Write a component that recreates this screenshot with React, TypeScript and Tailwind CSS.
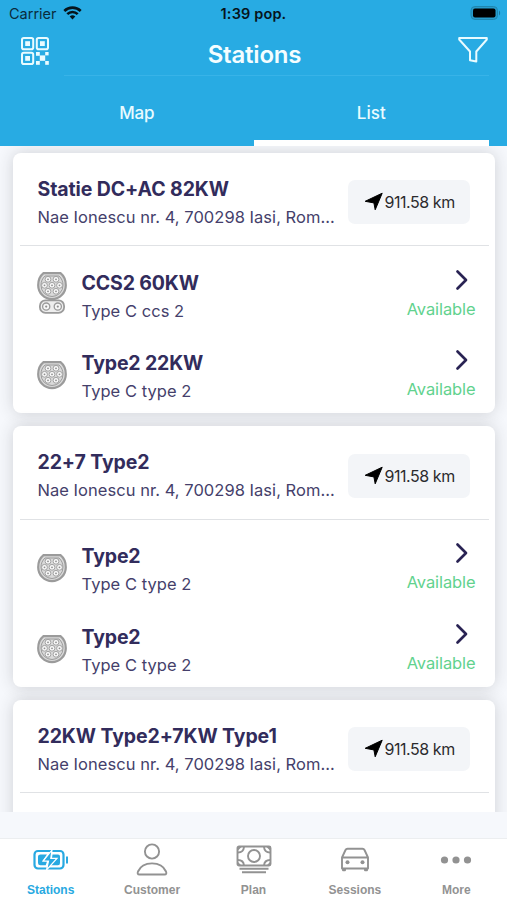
import React from 'react';

type Connector = { name: string; type: string; ccs?: boolean };
type Station = { name: string; connectors: Connector[] };

const stations: Station[] = [
  {
    name: 'Statie DC+AC 82KW',
    connectors: [
      { name: 'CCS2 60KW', type: 'Type C ccs 2', ccs: true },
      { name: 'Type2 22KW', type: 'Type C type 2' },
    ],
  },
  {
    name: '22+7 Type2',
    connectors: [
      { name: 'Type2', type: 'Type C type 2' },
      { name: 'Type2', type: 'Type C type 2' },
    ],
  },
  {
    name: '22KW Type2+7KW Type1',
    connectors: [],
  },
];

const pins: [number, number][] = [
  [11, 8], [19, 8], [7.5, 14], [15, 14], [22.5, 14], [11, 20], [19, 20],
];

function Plug({ ccs }: { ccs?: boolean }) {
  return (
    <svg width="30" height={ccs ? 42 : 29} viewBox={ccs ? '0 0 30 42' : '0 0 30 29'} fill="none" stroke="#9b9b9b">
      <path d="M6.5 1.2H23.5C27 4 28.8 8.5 28.8 13.2A13.8 14 0 0 1 1.2 13.2C1.2 8.5 3 4 6.5 1.2Z" strokeWidth="2.2" fill="#dadada" />
      <path d="M8 4H22C24.7 6.5 26 9.5 26 13.3A11 11.2 0 0 1 4 13.3C4 9.5 5.3 6.5 8 4Z" strokeWidth="1" />
      {pins.map(([x, y]) => (
        <g key={`${x}-${y}`}>
          <circle cx={x} cy={y - 0.7} r="2.9" strokeWidth="0.9" fill="#f7f7f7" />
          <circle cx={x} cy={y - 0.7} r="0.9" fill="#8f8f8f" stroke="none" />
        </g>
      ))}
      {ccs && (
        <g>
          <rect x="2.9" y="28.4" width="24.2" height="12.4" rx="5.5" strokeWidth="1.8" fill="#eee" />
          <circle cx="9.2" cy="34.6" r="3.6" strokeWidth="1.3" fill="#f7f7f7" />
          <circle cx="20.8" cy="34.6" r="3.6" strokeWidth="1.3" fill="#f7f7f7" />
          <circle cx="9.2" cy="34.6" r="1.1" fill="#8f8f8f" stroke="none" />
          <circle cx="20.8" cy="34.6" r="1.1" fill="#8f8f8f" stroke="none" />
        </g>
      )}
    </svg>
  );
}

function StationCard({ station }: { station: Station }) {
  return (
    <section className="min-h-[260.5px] w-[482px] shrink-0 rounded-[8px] bg-white pb-[5.5px] shadow-[0_0_16px_rgba(40,42,46,0.19)]">
      <div className="flex h-[92.5px] items-start pl-[25px] pr-[24px]">
        <div className="w-[310px] pt-[22px] text-[#322c5c]">
          <h2 className="whitespace-nowrap text-[19.5px] font-bold leading-[28px] tracking-[-0.1px]">{station.name}</h2>
          <p className="whitespace-nowrap text-[16.5px] leading-[28px] tracking-[0.04px] text-[#453f6b]">Nae Ionescu nr. 4, 700298 Iasi, Rom...</p>
        </div>
        <div className="mt-[27.5px] flex h-[44px] w-[122px] items-center rounded-[7px] bg-[#f3f5f8] pl-[16px]">
          <svg width="20" height="20" viewBox="0 0 20 20" fill="#000" stroke="#000" strokeWidth="1" strokeLinejoin="round"><path d="M18.2 1.200 11.200 17.800 9.900 10.900 1.200 9.300Z" /></svg>
          <span className="whitespace-nowrap pl-[1px] text-[16px] leading-[20px] tracking-[-0.45px] text-[#2b2b2d]">911.58 km</span>
        </div>
      </div>
      <div className="ml-[7px] mr-[6px] h-px bg-[#e0e2e5]" />
      {station.connectors.map((c, i) => (
        <div key={i} className="flex h-[80.7px] pl-[25px] pr-[19px]">
          <div className={`-ml-[0.5px] w-[44.5px] ${c.ccs ? 'pt-[26px]' : 'pt-[34.5px]'}`}><Plug ccs={c.ccs} /></div>
          <div className="flex-1 pt-[22.5px] text-[#322c5c]">
            <h3 className="text-[19.5px] font-bold leading-[28px] tracking-[-0.15px]">{c.name}</h3>
            <p className="text-[16.5px] leading-[28px] tracking-[0.04px] text-[#453f6b]">{c.type}</p>
          </div>
          <div className="flex flex-col items-end pt-[19.5px]">
            <svg className="mr-[6px]" width="16" height="28" viewBox="0 0 16 28" fill="none" stroke="#292353" strokeWidth="2.7" strokeLinecap="round" strokeLinejoin="round"><path d="M3.5 5.5 12 14 3.5 22.5" /></svg>
            <span className="mt-[1px] text-[16.5px] leading-[28px] tracking-[-0.1px] text-[#61d28e]">Available</span>
          </div>
        </div>
      ))}
    </section>
  );
}

function QrIcon() {
  return (
    <svg width="30" height="30" viewBox="0 0 30 30" fill="none" stroke="#e9fbff" strokeWidth="2">
      <rect x="2" y="2" width="11.2" height="11.2" rx="1.8" />
      <rect x="16.8" y="2" width="11.2" height="11.2" rx="1.8" />
      <rect x="2" y="16.8" width="11.2" height="11.2" rx="1.8" />
      <g fill="#e9fbff" stroke="none">
        <rect x="5.2" y="5.2" width="4.8" height="4.8" />
        <rect x="20" y="5.2" width="4.8" height="4.8" />
        <rect x="5.2" y="20" width="4.8" height="4.8" />
        <rect x="16" y="16" width="3.8" height="3.8" />
        <rect x="19.8" y="19.4" width="5.4" height="5.4" />
        <rect x="25.2" y="16" width="3.4" height="3.4" />
        <rect x="16" y="25" width="3.8" height="3.8" />
        <rect x="25.2" y="25" width="3.6" height="3.8" />
      </g>
    </svg>
  );
}

function TabItem({ label, active, children }: { label: string; active?: boolean; children: React.ReactNode }) {
  return (
    <div className={`flex flex-1 flex-col items-center ${active ? 'text-[#28a9e1]' : 'text-[#929292]'}`}>
      <div className="h-[44px]">{children}</div>
      <span className="font-['Liberation_Sans',sans-serif] text-[12px] font-bold leading-[14px]">{label}</span>
    </div>
  );
}

export default function App() {
  return (
    <div className="flex h-[900px] w-[507px] flex-col overflow-hidden bg-[#f6f8fc] font-[Inter,sans-serif]">
      <header className="flex h-[146px] shrink-0 flex-col bg-[#28abe3]">
        <div className="grid h-[28px] grid-cols-3 items-center pl-[9px] pr-[7px]">
          <div className="flex items-center gap-[6px] text-[#0a2c3c]">
            <span className="text-[14.5px] leading-[20px]">Carrier</span>
            <svg className="-mt-[2px]" width="19" height="14" viewBox="0 0 19 14" fill="none" stroke="#06141b" strokeWidth="2.6">
              <path d="M1.3 5A11.7 11.7 0 0 1 17.7 5M4.3 8.2a7.4 7.4 0 0 1 10.4 0" />
              <path d="M6.7 10.5a4.2 4.2 0 0 1 5.6 0L9.5 13.5Z" fill="#06141b" stroke="none" />
            </svg>
          </div>
          <div className="pr-[2px] text-center text-[14.5px] font-semibold leading-[20px] tracking-[0.15px] text-[#06141b]">1:39 pop.</div>
          <div className="-mr-[1px] -mt-[2px] flex justify-end">
            <svg width="31" height="14" viewBox="0 0 31 14">
              <rect x="1" y=".5" width="26.5" height="13" rx="4" fill="#279bcb" stroke="#1f86af" />
              <rect x="3" y="2.5" width="22.5" height="9" rx="2" fill="#000" />
              <path d="M29 4.5C30.5 5.2 30.5 8.8 29 9.5Z" fill="#1c7a9f" />
            </svg>
          </div>
        </div>
        <div className="flex h-[47px] items-start justify-between pl-[20px] pr-[18px]">
          <div className="w-[32px] pt-[8px]"><QrIcon /></div>
          <h1 className="pt-[11px] text-[24px] font-semibold leading-[32px] tracking-[-0.2px] text-[#f4fdff]">Stations</h1>
          <svg className="mt-[8px]" width="32" height="30" viewBox="0 0 32 30" fill="none" stroke="#e9fbff" strokeWidth="2" strokeLinejoin="round">
            <path d="M2.2 2H29.8V3.5L19.3 15.5V25.500L13 24.200V15.500L2.2 3.5Z" />
          </svg>
        </div>
        <div className="ml-[64px] mr-[18px] h-px shrink-0 bg-[#38b3e8]" />
        <nav className="mx-[18px] grid flex-1 grid-cols-2 text-center text-[17px] font-medium text-[#e9fbff]">
          <div className="pl-[2px] pt-[24px] leading-[26px] tracking-[-0.3px]">Map</div>
          <div className="flex flex-col justify-between pt-[24px] leading-[26px]">List<span className="h-[6px] bg-white" /></div>
        </nav>
      </header>

      <main className="flex h-[666px] shrink-0 flex-col items-center gap-[13.2px] overflow-hidden pt-[6.6px]">
        {stations.map((s) => <StationCard key={s.name} station={s} />)}
      </main>

      <footer className="mt-[26px] flex flex-1 border-t border-[#eceef0] bg-white">
        <TabItem label="Stations" active>
          <svg className="mt-[9px]" width="36" height="24" viewBox="0 0 36 24" fill="none" stroke="currentColor">
            <rect x="1.5" y="3" width="29" height="17.5" rx="3.5" strokeWidth="2.2" />
            <path d="M7.5 6.5H14L9 13.5H14L12.7 17.2H7.5Q5 17.2 5 15V8.5Q5 6.5 7.5 6.5ZM19.5 6.5H25Q27 6.5 27 8.5V15Q27 17.2 25 17.2H18L24.3 10H19Z" fill="currentColor" stroke="none" />
            <path d="M19 2 10.3 13H15.5L13.5 22 24 10.3H17.8Z" fill="currentColor" stroke="#fff" strokeWidth="1.2" />
            <path d="M34 8.5V15.5" strokeWidth="2" />
          </svg>
        </TabItem>
        <TabItem label="Customer">
          <svg className="mt-[4px]" width="32" height="34" viewBox="0 0 32 34" fill="none" stroke="currentColor" strokeWidth="1.9">
            <circle cx="16" cy="8.5" r="7.1" />
            <path d="M3.5 31.5H28.5C30.5 31.5 30.6 30 30 28.5C27.8 23.4 22.5 20.4 16 20.4S4.2 23.4 2 28.5C1.4 30 1.5 31.5 3.5 31.5Z" />
          </svg>
        </TabItem>
        <TabItem label="Plan">
          <svg className="mt-[6px]" width="36" height="30" viewBox="0 0 36 30" fill="none" stroke="currentColor" strokeWidth="1.9">
            <rect x="1.5" y="1.5" width="33" height="19" rx="1.5" />
            <circle cx="18" cy="11" r="6" />
            <path d="M2 7.5Q7.5 7.5 8 2M28 2Q28.5 7.5 34 7.5M2 15Q7.5 15 8 20.5M28 20.5Q28.5 15 34 15M3.5 23.8H32.5M6 27.3H30" />
            <path d="M2 2H5.5L2 5.5ZM34 2H30.5L34 5.5ZM2 20.5V17L5.5 20.5ZM34 20.5V17L30.5 20.5Z" fill="currentColor" stroke="none" />
          </svg>
        </TabItem>
        <TabItem label="Sessions">
          <svg className="mt-[8px]" width="30" height="26" viewBox="0 0 30 26" fill="none" stroke="currentColor" strokeWidth="1.9" strokeLinejoin="round">
            <path d="M2 10.5 5.5 3Q6.1 1.7 7.5 1.7H22.5Q23.9 1.7 24.5 3L28 10.5V21.5H2ZM2 10.5H28M3 21.5V23.2H5V21.5M25 21.5V23.2H27V21.5" />
            <circle cx="7.5" cy="15.2" r="2" fill="currentColor" stroke="none" /><circle cx="22.5" cy="15.2" r="2" fill="currentColor" stroke="none" />
          </svg>
        </TabItem>
        <TabItem label="More">
          <svg className="mt-[17px]" width="32" height="8" viewBox="0 0 32 8" fill="currentColor"><circle cx="4.5" cy="4" r="3.6" /><circle cx="16" cy="4" r="3.6" /><circle cx="27.5" cy="4" r="3.6" /></svg>
        </TabItem>
      </footer>
    </div>
  );
}
